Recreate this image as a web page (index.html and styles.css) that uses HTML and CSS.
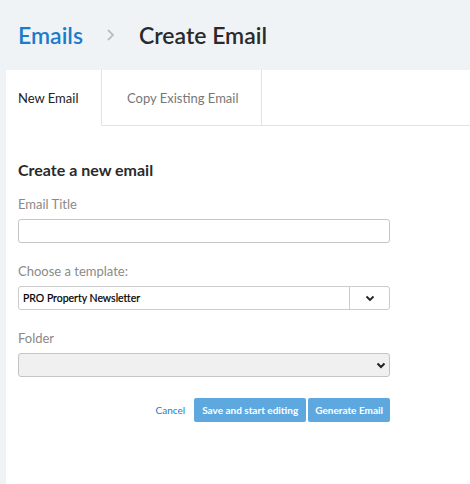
FILE: index.html
```html
<!DOCTYPE html>
<html>
<head>
<meta charset="utf-8">
<link rel="stylesheet" href="styles.css">
</head>
<body>
<header class="page-header">
  <a class="crumb-link">Emails</a>
  <span class="crumb-sep"><svg width="9" height="14" viewBox="0 0 9 14"><path d="M2 2 L7 7 L2 12" fill="none" stroke="#b9bec4" stroke-width="1.8"/></svg></span>
  <h1 class="crumb-current">Create Email</h1>
</header>
<main class="panel">
  <nav class="tabs">
    <div class="tab tab-active">New Email</div>
    <div class="tab">Copy Existing Email</div>
    <div class="tab-fill"></div>
  </nav>
  <section class="form">
    <h2 class="form-title">Create a new email</h2>
    <label class="label">Email Title</label>
    <div class="input"></div>
    <label class="label">Choose a template:</label>
    <div class="combo">
      <span class="combo-text">PRO Property Newsletter</span>
      <span class="combo-btn"><svg width="10" height="7" viewBox="0 0 10 7"><path d="M1.5 1.5 L5 5 L8.5 1.5" fill="none" stroke="#222" stroke-width="1.8"/></svg></span>
    </div>
    <label class="label">Folder</label>
    <div class="select">
      <svg width="10" height="7" viewBox="0 0 10 7"><path d="M1.5 1.5 L5 5 L8.5 1.5" fill="none" stroke="#222" stroke-width="2"/></svg>
    </div>
    <div class="actions">
      <a class="cancel">Cancel</a>
      <button class="btn btn-save">Save and start editing</button>
      <button class="btn btn-gen">Generate Email</button>
    </div>
  </section>
</main>
</body>
</html>
```
FILE: styles.css
```css
* { box-sizing: border-box; }
html, body { margin: 0; padding: 0; }
body {
  background: #f0f3f6;
  font-family: Lato, "Liberation Sans", sans-serif;
  color: #222;
  width: 470px;
  height: 484px;
  overflow: hidden;
  display: flex;
  flex-direction: column;
}
.page-header {
  height: 70px;
  display: flex;
  align-items: center;
  padding: 0 0 0 18px;
}
.crumb-link {
  color: #1a7ccc;
  font-size: 23px;
  font-weight: 600;
}
.crumb-sep {
  display: flex;
  margin: 0 24px 0 23px;
}
.crumb-current {
  margin: 0;
  font-size: 23px;
  font-weight: 600;
  color: #2a2a2a;
}
.panel {
  flex: 1;
  margin-left: 6px;
  background: #fff;
}
.tabs {
  display: flex;
  height: 56px;
}
.tab {
  display: flex;
  align-items: center;
  font-size: 13px;
  color: #777;
  padding: 0 22px 0 25px;
  border-right: 1px solid #e2e2e2;
  border-bottom: 1px solid #e2e2e2;
}
.tab-active {
  width: 96px;
  padding: 0 12px;
  color: #222;
  border-bottom-color: transparent;
}
.tab-fill {
  flex: 1;
  border-bottom: 1px solid #e2e2e2;
}
.form {
  width: 384px;
  padding: 34px 0 0 12px;
  display: flex;
  flex-direction: column;
}
.form-title {
  margin: 0 0 16px;
  font-size: 16px;
  font-weight: 700;
  color: #2a2a2a;
  line-height: 20px;
}
.label {
  font-size: 13px;
  color: #8a8a8a;
  line-height: 16px;
  margin-bottom: 7px;
}
.input, .combo, .select {
  height: 24px;
  border: 1px solid #c4c4c4;
  border-radius: 3px;
  margin-bottom: 20px;
}
.combo {
  display: flex;
  align-items: center;
  border-color: #ccc;
}
.combo-text {
  flex: 1;
  padding-left: 4px;
  font-size: 10.5px;
  font-weight: 400;
  color: #000;
  -webkit-text-stroke: 0.2px #000;
}
.combo-btn {
  width: 40px;
  height: 100%;
  border-left: 1px solid #ccc;
  display: flex;
  align-items: center;
  justify-content: center;
}
.select {
  background: #f0f0f0;
  display: flex;
  align-items: center;
  justify-content: flex-end;
  padding-right: 3px;
  margin-bottom: 21px;
}
.actions {
  display: flex;
  justify-content: flex-end;
  align-items: center;
  gap: 2px;
}
.cancel {
  color: #1a7ccc;
  font-size: 10px;
  margin-right: 7px;
}
.btn {
  height: 24px;
  border: none;
  border-radius: 2px;
  background: #5ea8e0;
  color: #fff;
  font-family: Lato, "Liberation Sans", sans-serif;
  font-size: 10px;
  font-weight: 700;
  padding: 0 8px;
}
.btn-gen { padding: 0 7px; }
```
